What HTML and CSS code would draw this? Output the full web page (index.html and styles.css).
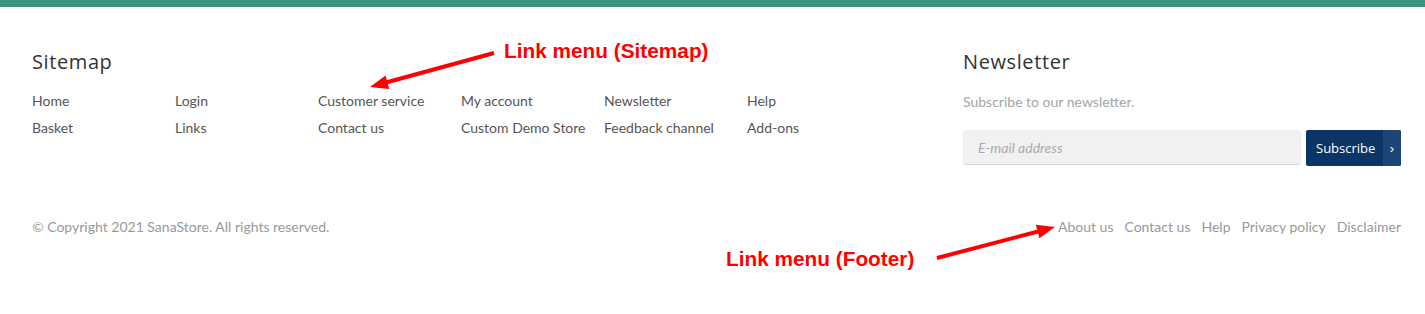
FILE: index.html
```html
<!DOCTYPE html>
<html lang="en">
<head>
    <meta charset="UTF-8">
    <title>Footer</title>
    <link rel="stylesheet" href="styles.css">
</head>
<body>
    <div class="topbar"></div>
    <!--================================= footer =================================-->
    <footer class="footer">
        <div class="footer-main">
            <div class="sitemap">
                <h2 class="heading">Sitemap</h2>
                <ul class="sitemap-links">
                    <li><a href="#">Home</a></li>
                    <li><a href="#">Login</a></li>
                    <li><a href="#">Customer service</a></li>
                    <li><a href="#">My account</a></li>
                    <li><a href="#">Newsletter</a></li>
                    <li><a href="#">Help</a></li>
                    <li><a href="#">Basket</a></li>
                    <li><a href="#">Links</a></li>
                    <li><a href="#">Contact us</a></li>
                    <li><a href="#">Custom Demo Store</a></li>
                    <li><a href="#">Feedback channel</a></li>
                    <li><a href="#">Add-ons</a></li>
                </ul>
            </div>
            <div class="newsletter">
                <h2 class="heading">Newsletter</h2>
                <p class="newsletter-text">Subscribe to our newsletter.</p>
                <form class="newsletter-form">
                    <input type="text" class="email" placeholder="E-mail address"/>
                    <button type="button" class="btn-subscribe"><span class="btn-text">Subscribe</span><span class="btn-arrow">›</span></button>
                </form>
            </div>
        </div>
        <div class="footer-bottom">
            <span class="copyright">© Copyright 2021 SanaStore. All rights reserved.</span>
            <ul class="footer-links">
                <li><a href="#">About us</a></li>
                <li><a href="#">Contact us</a></li>
                <li><a href="#">Help</a></li>
                <li><a href="#">Privacy policy</a></li>
                <li><a href="#">Disclaimer</a></li>
            </ul>
        </div>
    </footer>
    <!--================================= annotations =================================-->
    <div class="note note-sitemap">Link menu (Sitemap)</div>
    <div class="note note-footer">Link menu (Footer)</div>
    <svg class="arrows" width="1425" height="314" viewBox="0 0 1425 314">
        <line x1="494" y1="53" x2="387" y2="82.3" stroke="#f00" stroke-width="4"/>
        <polygon points="370,87 389.2,89 385.6,75.5" fill="#f00"/>
        <line x1="937" y1="258" x2="1038" y2="231.5" stroke="#f00" stroke-width="4"/>
        <polygon points="1055,227 1039.4,238.3 1035.8,224.8" fill="#f00"/>
    </svg>
</body>
</html>
```
FILE: styles.css
```css
html {overflow: hidden;}
body {margin: 0;min-height: 314px;background: #fff;font-family: Lato, "Open Sans", sans-serif;color: #555;position: relative;}
ul {list-style: none;margin: 0;padding: 0;}
a {text-decoration: none;color: inherit;}

.topbar {height: 7px;background: #3a937f;}

/*================================= footer =================================*/
.footer {padding: 42px 24px 0 32px;}
.footer-main {display: flex;justify-content: space-between;}
.heading {margin: 0;font-family: "Open Sans", sans-serif;font-weight: 400;font-size: 20px;line-height: 26px;color: #333;letter-spacing: .6px;}

.sitemap-links {display: grid;grid-template-columns: repeat(6, 143px);margin-top: 12px;}
.sitemap-links li {font-size: 14px;line-height: 27px;white-space: nowrap;}

.newsletter {width: 438px;}
.newsletter-text {margin: 13px 0 0;font-size: 14px;line-height: 27px;color: #a5a5a5;}
.newsletter-form {display: flex;gap: 5px;margin-top: 15px;}
.email {flex: 1;height: 35px;box-sizing: border-box;border: 0;border-bottom: 1px solid #d6d6d6;border-radius: 2px;background: #f1f1f1;padding: 0 15px;font-family: Lato, sans-serif;font-size: 14px;outline: none;}
.email::placeholder {color: #aaa;font-style: italic;}
.btn-subscribe {display: flex;align-items: stretch;width: 95px;height: 36px;padding: 0;border: 0;border-radius: 2px;background: #0a3566;color: #fff;overflow: hidden;cursor: pointer;}
.btn-text {flex: 1;display: flex;align-items: center;padding-left: 10px;font-family: "Open Sans", sans-serif;font-size: 13px;}
.btn-arrow {width: 18px;display: flex;align-items: center;justify-content: center;background: #1b4677;font-size: 13px;}

.footer-bottom {display: flex;justify-content: space-between;align-items: center;margin-top: 51px;font-size: 14px;line-height: 20px;color: #999;}
.footer-links {display: flex;gap: 11px;}

/*================================= annotations =================================*/
.note {position: absolute;font-family: "Liberation Sans", Arial, sans-serif;font-weight: bold;font-size: 20.8px;line-height: 24px;color: #f00;white-space: nowrap;z-index: 2;}
.note-sitemap {left: 504px;top: 39px;}
.note-footer {left: 726px;top: 247px;}
.arrows {position: absolute;left: 0;top: 0;pointer-events: none;}
```
